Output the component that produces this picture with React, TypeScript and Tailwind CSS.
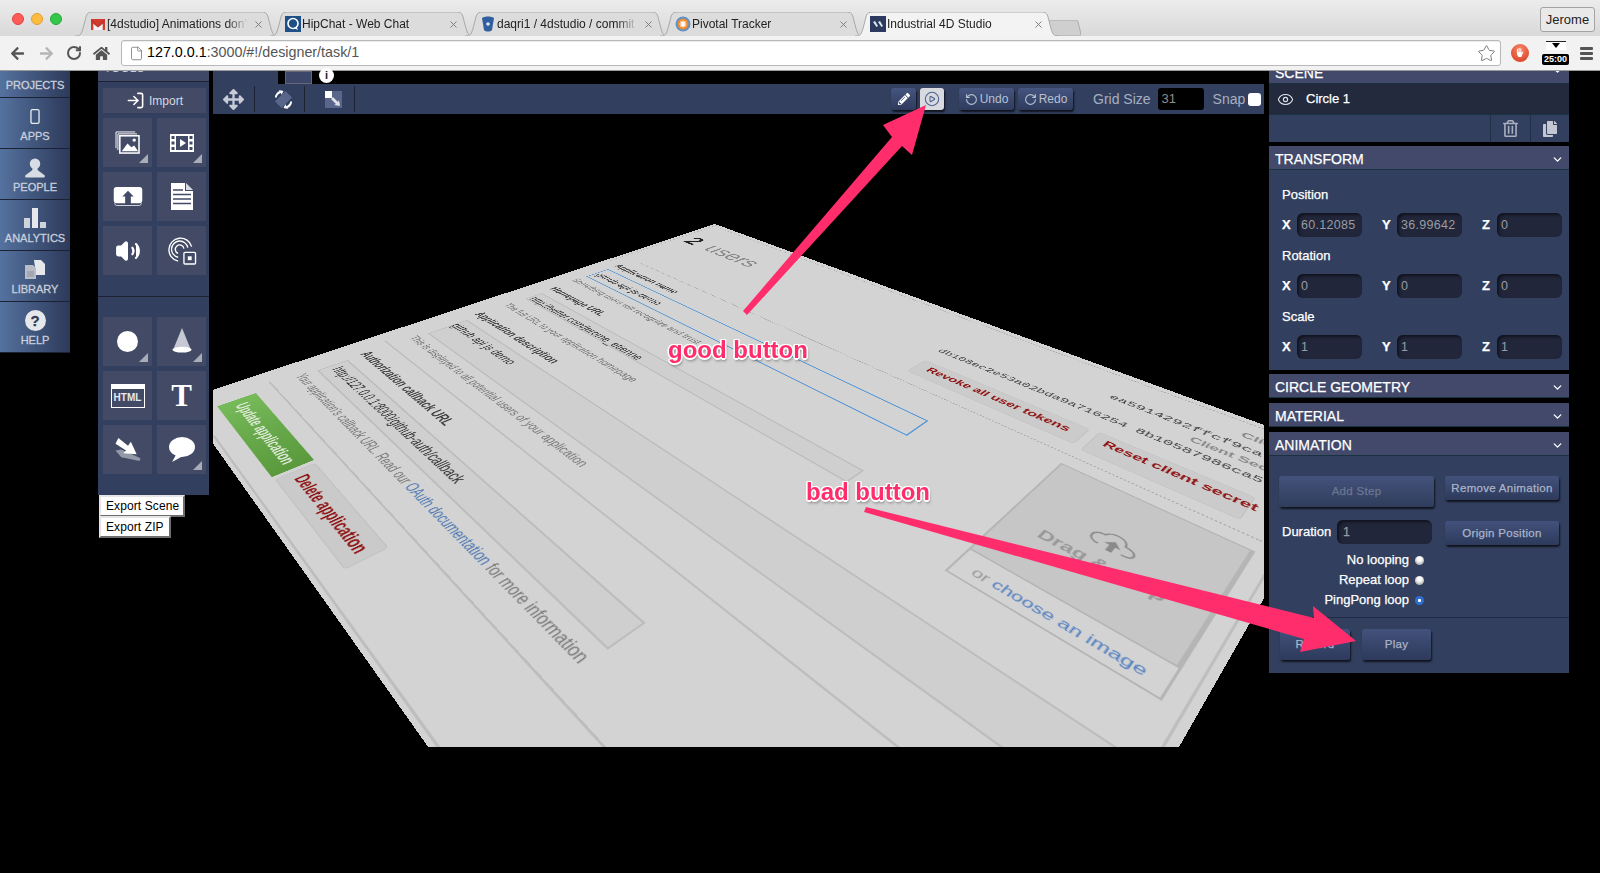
import { ReactNode } from "react";
import { ChevronDown, CirclePlay, Eye, File, LogIn, RotateCcw, RotateCw, Star, X, Volume2 } from "lucide-react";
import { FaArrowLeft, FaArrowRight, FaArrowsAlt, FaCopy, FaHome, FaPencilAlt, FaRegTrashAlt } from "react-icons/fa";

// --- perspective plane: the page in the 3D view is a flat div warped onto this quad ---
const CANVAS_X = 213;
const CANVAS_Y = 114;
const W = 1000;
const H = 850;
type Pt = [number, number];
const QUAD: Pt[] = [
  [715, 224],
  [1346, 455],
  [844, 1333],
  [182, 400],
];

function solveQuad(q: Pt[]) {
  const [[x0, y0], [x1, y1], [x2, y2], [x3, y3]] = q;
  const dx1 = x1 - x2, dx2 = x3 - x2, dx3 = x0 - x1 + x2 - x3;
  const dy1 = y1 - y2, dy2 = y3 - y2, dy3 = y0 - y1 + y2 - y3;
  const den = dx1 * dy2 - dx2 * dy1;
  const g = (dx3 * dy2 - dx2 * dy3) / den;
  const h = (dx1 * dy3 - dx3 * dy1) / den;
  return { a: x1 - x0 + g * x1, b: x3 - x0 + h * x3, c: x0, d: y1 - y0 + g * y1, e: y3 - y0 + h * y3, f: y0, g, h };
}

const local = QUAD.map(([x, y]) => [x - CANVAS_X, y - CANVAS_Y] as Pt);
const T = solveQuad(local);
const planeMatrix = `matrix3d(${T.a / W},${T.d / W},0,${T.g / W},${T.b / H},${T.e / H},0,${T.h / H},0,0,1,0,${T.c},${T.f},0,1)`;

// screen pixel -> page unit
function toPage([sx, sy]: Pt): Pt {
  const x = sx - CANVAS_X;
  const y = sy - CANVAS_Y;
  const { a, b, c, d, e, f, g, h } = T;
  const A = e - f * h, B = c * h - b, C = b * f - c * e;
  const D = f * g - d, E = a - c * g, F = c * d - a * f;
  const G = d * h - e * g, I = b * g - a * h, J = a * e - b * d;
  const w = G * x + I * y + J;
  return [((A * x + B * y + C) / w) * W, ((D * x + E * y + F) / w) * H];
}

function fitSize(text: string, len: number, family: string, weight: string) {
  const ctx = typeof document !== "undefined" ? document.createElement("canvas").getContext("2d") : null;
  if (!ctx) return 14;
  ctx.font = `${weight} 100px ${family}`;
  return (len / ctx.measureText(text).width) * 100;
}

type PlaneTextProps = { from: Pt; to: Pt; text: string; className?: string; mono?: boolean; bold?: boolean; children?: ReactNode };

function PlaneText({ from, to, text, className = "", mono = false, bold = false, children }: PlaneTextProps) {
  const a = toPage(from);
  const b = toPage(to);
  const family = mono ? '"Liberation Mono"' : '"Liberation Sans"';
  const size = fitSize(text, b[0] - a[0], family, bold ? "bold" : "normal");
  return (
    <span
      className={`absolute -translate-y-1/2 whitespace-nowrap leading-none ${mono ? "font-['Liberation_Mono',monospace]" : ""} ${bold ? "font-bold" : ""} ${className}`}
      style={{ left: a[0], top: (a[1] + b[1]) / 2, fontSize: size }}
    >
      {children ?? text}
    </span>
  );
}

function PlaneBox({ tl, br, className = "", children }: { tl: Pt; br: Pt; className?: string; children?: ReactNode }) {
  const a = toPage(tl);
  const b = toPage(br);
  return <div className={`absolute ${className}`} style={{ left: a[0], top: a[1], width: b[0] - a[0], height: b[1] - a[1] }}>{children}</div>;
}

function PlaneRule({ from, to, className = "h-[2px] bg-[#bdbdbd]" }: { from: Pt; to: Pt; className?: string }) {
  const a = toPage(from);
  const b = toPage(to);
  return <div className={`absolute ${className}`} style={{ left: a[0], top: (a[1] + b[1]) / 2, width: b[0] - a[0] }} />;
}

function PlaneVRule({ from, to }: { from: Pt; to: Pt }) {
  const a = toPage(from);
  const b = toPage(to);
  return <div className="absolute w-[2px] bg-[#bdbdbd]" style={{ left: (a[0] + b[0]) / 2, top: a[1], height: b[1] - a[1] }} />;
}

function Plane() {
  return (
    <div className="absolute left-0 top-0 origin-top-left bg-[#d3d3d3] w-[1000px] h-[850px] font-['Liberation_Sans',sans-serif]" style={{ transform: planeMatrix }}>
      <div className="absolute left-[6px] top-0 h-[240px] border-l-2 border-dotted border-[#aaa]" />
      <PlaneRule from={[718, 228]} to={[1264, 428]} className="border-t-2 border-dotted border-[#aaa]" />
      <PlaneRule from={[640, 263]} to={[1263, 540]} className="border-t-2 border-dotted border-[#aaa]" />
      <PlaneRule from={[213, 436]} to={[445, 747]} />
      <PlaneRule from={[268, 382]} to={[613, 747]} />
      <PlaneRule from={[385, 341]} to={[902, 747]} />
      <PlaneVRule from={[1263, 573]} to={[1161, 747]} />

      <PlaneBox tl={[256, 393]} br={[272, 477]} className="bg-gradient-to-l from-[#5a9a3c] to-[#76ba5a]" />
      <PlaneText from={[237, 405]} to={[292, 462]} text="Update application" className="text-[#dfe9d8]" bold />
      <PlaneBox tl={[315, 463]} br={[345, 570]} className="bg-[#cacaca] border border-[#c0c0c0] rounded-sm" />
      <PlaneText from={[298, 477]} to={[365, 550]} text="Delete application" className="text-[#8f1212]" bold />

      <PlaneText from={[299, 375]} to={[588, 658]} text="Your application's callback URL. Read our OAuth documentation for more information" className="text-[#777]">
        Your application's callback URL. Read our <span className="text-[#4a76b0]">OAuth documentation</span> for more information
      </PlaneText>

      <PlaneText from={[363, 353]} to={[450, 424]} text="Authorization callback URL" className="text-[#444]" bold />
      <PlaneBox tl={[348, 360]} br={[608, 650]} className="bg-[#cfcfcf] border-2 border-[#bdbdbd]" />
      <PlaneText from={[333, 369]} to={[462, 481]} text="http://127.0.0.1:8000/github-auth/callback" className="text-[#333]" />

      <PlaneText from={[412, 337]} to={[586, 465]} text="This is displayed to all potential users of your application" className="text-[#777]" />
      <PlaneText from={[478, 313]} to={[557, 362]} text="Application description" className="text-[#444]" bold />
      <PlaneBox tl={[467, 320]} br={[1100, 819]} className="bg-[#cfcfcf] border-2 border-[#bdbdbd]" />
      <PlaneText from={[453, 325]} to={[514, 363]} text="github api js demo" className="text-[#333]" />

      <PlaneText from={[507, 304]} to={[636, 381]} text="The full URL to your application homepage" className="text-[#777]" />
      <PlaneText from={[552, 288]} to={[603, 315]} text="Homepage URL" className="text-[#444]" bold />
      <PlaneBox tl={[542, 293]} br={[847, 483]} className="bg-[#cfcfcf] border-2 border-[#bdbdbd]" />
      <PlaneText from={[532, 298]} to={[640, 359]} text="http://twitter.com/jerome_etienne" className="text-[#333]" />

      <PlaneText from={[575, 279]} to={[700, 343]} text="Something users will recognize and trust" className="text-[#777]" />
      <PlaneText from={[617, 265]} to={[676, 293]} text="Application name" className="text-[#444]" bold />
      <PlaneBox tl={[608, 269]} br={[907, 436]} className="border-2 border-[#5b9bd5] bg-[#d3d3d3]" />
      <PlaneText from={[598, 274]} to={[660, 304]} text="github-api-js-demo" className="text-[#333]" />

      <PlaneText from={[687, 240]} to={[758, 264]} text="2  users" className="text-[#888] whitespace-pre">
        <span className="font-bold text-[#222]">2</span>{"  users"}
      </PlaneText>

      <PlaneText from={[939, 350]} to={[1263, 482]} text="db108ec2e53a02bda9a716254 8b10587986ca5" className="text-[#444]" mono />
      <PlaneText from={[1109, 397]} to={[1263, 455]} text="ea5914292ffcf9ca" className="text-[#444]" mono />
      <PlaneText from={[1241, 435]} to={[1290, 452]} text="Client" className="text-[#888]" bold />
      <PlaneText from={[1191, 438]} to={[1290, 478]} text="Client Secret" className="text-[#888]" bold />

      <PlaneBox tl={[925, 360]} br={[1074, 444]} className="bg-[#cbcbcb] border border-[#c0c0c0] rounded-sm" />
      <PlaneText from={[928, 369]} to={[1069, 430]} text="Revoke all user tokens" className="text-[#8f1212]" bold />
      <PlaneBox tl={[1099, 432]} br={[1240, 520]} className="bg-[#cbcbcb] border border-[#c0c0c0] rounded-sm" />
      <PlaneText from={[1104, 443]} to={[1257, 510]} text="Reset client secret" className="text-[#8f1212]" bold />

      <PlaneBox tl={[1061, 463]} br={[1161, 701]} className="bg-[#d3d3d3] border-2 border-[#b5b5b5]" />
      <PlaneBox tl={[1061, 463]} br={[1179, 668]} className="bg-[#c6c6c6] border-2 border-[#b5b5b5]" />
      <PlaneText from={[1039, 533]} to={[1166, 598]} text="Drag & drop" className="text-[#999]" bold />
      <PlaneBox tl={[1096, 524]} br={[1134, 566]} className="flex items-center justify-center text-[#8a8a8a]">
        <svg viewBox="0 0 48 32" className="w-full h-full" fill="none" stroke="currentColor" strokeWidth="2">
          <path d="M12 26c-6 0-10-4-10-9s5-9 10-8c2-5 7-8 13-7 6 1 9 6 9 10 6 0 11 3 11 8s-5 6-10 6" />
          <path d="M24 12l-8 8h5v10h6V20h5z" fill="currentColor" stroke="none" />
        </svg>
      </PlaneBox>
      <PlaneText from={[972, 572]} to={[1147, 672]} text="or choose an image" className="text-[#999]">
        or <span className="text-[#5480c0]">choose an image</span>
      </PlaneText>
    </div>
  );
}

// --- browser chrome ---
function GmailIcon() {
  return (
    <svg viewBox="0 0 16 16" className="w-4 h-4 shrink-0">
      <path d="M1 3h14v11h-2.5V7L8 10.5 3.5 7v7H1z" fill="#d33b2c" />
      <path d="M3.5 5.5L8 9l4.5-3.5V14h-9z" fill="#f2f2f2" />
      <path d="M1 3l7 5.5L15 3v3L8 11.5 1 6z" fill="#c5352a" />
    </svg>
  );
}
function HipChatIcon() {
  return (
    <svg viewBox="0 0 16 16" className="w-4 h-4 shrink-0">
      <rect width="16" height="16" fill="#1f4f87" />
      <circle cx="8" cy="7.5" r="5" fill="none" stroke="#fff" strokeWidth="1.6" />
      <path d="M9 12l4 2-1.5-3.5z" fill="#fff" />
    </svg>
  );
}
function BucketIcon() {
  return (
    <svg viewBox="0 0 16 16" className="w-4 h-4 shrink-0">
      <path d="M2 2c3-2 9-2 12 0l-2 12c-2 2-6 2-8 0z" fill="#2f5f9e" />
      <circle cx="8" cy="8" r="1.8" fill="#dfe8f2" />
    </svg>
  );
}
function PivotalIcon() {
  return (
    <svg viewBox="0 0 16 16" className="w-4 h-4 shrink-0">
      <circle cx="8" cy="8" r="7.5" fill="#5f92c7" />
      <circle cx="8" cy="8" r="5.5" fill="#f08a2c" />
      <path d="M8 4.5v7M4.5 8h7M5.5 5.5l5 5M10.5 5.5l-5 5" stroke="#fff" strokeWidth="1.2" />
    </svg>
  );
}
function StudioIcon() {
  return (
    <svg viewBox="0 0 16 16" className="w-4 h-4 shrink-0">
      <rect width="16" height="16" fill="#2b3a5e" />
      <path d="M3 6l2-1 3 5-1.500 1zM8 6l2-1 3 5-1.500 1z" fill="#dfe5f0" />
    </svg>
  );
}

function Tab({ icon, title, active = false }: { icon: ReactNode; title: string; active?: boolean }) {
  return (
    <div className={`relative w-[204px] h-[24px] -ml-[9px] first:ml-0 flex items-center pl-[15px] pr-[15px] ${active ? "z-10" : ""}`}>
      <svg viewBox="0 0 200 24" preserveAspectRatio="none" className="absolute inset-0 w-full h-full">
        <path
          d="M0 24C6 24 6 22 8 16L11 4C12 1 14 0 17 0L183 0C186 0 188 1 189 4L192 16C194 22 194 24 200 24"
          fill={active ? "#f3f3f3" : "#dcdcdc"}
          stroke="#a9a9a9"
          vectorEffect="non-scaling-stroke"
        />
      </svg>
      <div className="relative flex items-center w-full gap-px">
        {icon}
        <span className="flex-1 overflow-hidden whitespace-nowrap text-[12px] text-[#222] [mask-image:linear-gradient(to_right,#000_85%,transparent)]">{title}</span>
        <X size={11} strokeWidth={2} className="text-[#777] ml-1 shrink-0" />
      </div>
    </div>
  );
}

function BrowserChrome() {
  return (
    <div className="h-[71px] shrink-0 bg-[#e6e6e6] border-b border-[#9a9a9a]">
      <div className="relative h-[36px] flex items-end bg-gradient-to-b from-[#ececec] to-[#d9d9d9]">
        <div className="flex items-center gap-[7px] self-start pt-[13px] pl-[12px] w-[76px]">
          <span className="w-3 h-3 rounded-full bg-[#fc5b57] border border-[#e0443e]" />
          <span className="w-3 h-3 rounded-full bg-[#fdbc40] border border-[#dea034]" />
          <span className="w-3 h-3 rounded-full bg-[#34c84a] border border-[#27aa35]" />
        </div>
        <div className="flex items-end -ml-px">
          <Tab icon={<GmailIcon />} title="[4dstudio] Animations don't" />
          <Tab icon={<HipChatIcon />} title="HipChat - Web Chat" />
          <Tab icon={<BucketIcon />} title="daqri1 / 4dstudio / commit" />
          <Tab icon={<PivotalIcon />} title="Pivotal Tracker" />
          <Tab icon={<StudioIcon />} title="Industrial 4D Studio" active />
          <div className="relative w-[32px] h-[16px] -ml-[10px]">
            <svg viewBox="0 0 32 16" preserveAspectRatio="none" className="absolute inset-0 w-full h-full">
              <path d="M2 16L0 2C0 1 1 0 2 0H26C28 0 29 1 29 2L32 14C32 15 31 16 30 16Z" fill="#cfcfcf" stroke="#a9a9a9" />
            </svg>
          </div>
        </div>
        <div className="ml-auto self-start mt-[7px] mr-[5px] w-[55px] h-[25px] rounded-[3px] border border-[#a3a3a3] bg-[#e9e9e9] flex items-center justify-center text-[13px] text-[#222]">Jerome</div>
      </div>
      <div className="h-[34px] bg-[#f2f2f2] flex items-center">
        <div className="w-[121px] flex items-center shrink-0 pl-[10px]">
          <FaArrowLeft size={15} className="text-[#555]" />
          <FaArrowRight size={15} className="text-[#b5b5b5] ml-[14px]" />
          <RotateCw size={16} strokeWidth={3} className="text-[#555] ml-[12px]" />
          <FaHome size={17} className="text-[#555] ml-[11px]" />
        </div>
        <div className="flex items-center w-[1380px] h-[26px] rounded-[3px] border border-[#b8b8b8] bg-white shadow-[inset_0_1px_1px_rgba(0,0,0,0.08)] pl-[7px] pr-[4px]">
          <File size={15} strokeWidth={1.3} className="text-[#777]" />
          <span className="ml-[3px] text-[14.300px] text-[#555] whitespace-nowrap">
            <span className="text-black">127.0.0.1</span>:3000/#!/designer/task/1
          </span>
          <Star size={19} strokeWidth={1.2} className="ml-auto text-[#777]" />
        </div>
        <div className="flex items-center flex-1 pl-[10px]">
          <div className="w-[18px] h-[18px] rounded-full bg-[radial-gradient(circle_at_50%_30%,#f58a6a,#d8331a)] flex items-center justify-center">
            <svg viewBox="0 0 10 12" className="w-[10px] h-[12px]"><path d="M2 5V2h1v3h.6V1h1v4h.7V1.500h1V6l1-1.500 1 .5-2 5H3.500L2 7.500z" fill="#fff" /></svg>
          </div>
          <div className="ml-[13px] flex flex-col items-center w-[27px]">
            <div className="w-[20px] h-[9px] bg-white border-t border-[#222] flex justify-center">
              <span className="mt-px w-0 h-0 border-x-[4px] border-x-transparent border-t-[5px] border-t-black" />
            </div>
            <div className="h-[11px] w-[27px] mt-[4px] bg-black rounded-[2px] text-white text-[9px] leading-[11px] text-center font-bold">25:00</div>
          </div>
          <div className="ml-[11px] flex flex-col gap-[2px]">
            <span className="w-[13px] h-[3px] rounded-[1px] bg-[#555]" />
            <span className="w-[13px] h-[3px] rounded-[1px] bg-[#555]" />
            <span className="w-[13px] h-[3px] rounded-[1px] bg-[#555]" />
          </div>
        </div>
      </div>
    </div>
  );
}

// --- left nav ---
function NavItem({ label, icon }: { label: string; icon: ReactNode }) {
  return (
    <div className="h-[51px] flex flex-col items-center justify-end pb-[5px] border-b border-[#1c2233] bg-gradient-to-r from-[#55729f] to-[#2d3a5a]">
      <div className="h-[28px] flex items-center justify-center">{icon}</div>
      <span className="text-[11px] leading-[13px] text-[#c9cfdb]">{label}</span>
    </div>
  );
}

function LeftNav() {
  return (
    <div className="w-[70px] shrink-0 [-webkit-text-stroke:0.3px_currentColor]">
      <div className="h-[27px] pt-[2px] flex items-center justify-center border-b border-[#1c2233] bg-gradient-to-r from-[#55729f] to-[#2d3a5a] text-[11px] text-[#c9cfdb]">PROJECTS</div>
      <NavItem
        label="APPS"
        icon={<svg viewBox="0 0 10 16" className="w-[10px] h-[15px]"><rect x="0.7" y="0.7" width="8.600" height="14.600" rx="1.500" fill="none" stroke="#e8ebf0" strokeWidth="1.400" /></svg>}
      />
      <NavItem
        label="PEOPLE"
        icon={<svg viewBox="0 0 22 22" className="w-[22px] h-[21px]"><circle cx="11" cy="7" r="5.500" fill="#d8dce4" /><path d="M8.500 11.500L8 14 1 19c-1 1 0 2.500 1 2.500h18c1 0 2-1.500 1-2.500l-7-5-.5-2.500z" fill="#d8dce4" /></svg>}
      />
      <NavItem
        label="ANALYTICS"
        icon={<svg viewBox="0 0 22 20" className="w-[22px] h-[20px]"><rect y="10" width="6" height="10" fill="#cfd3da" /><rect x="8" width="6" height="20" fill="#e6e8ec" /><rect x="16" y="14" width="6" height="6" fill="#cfd3da" /></svg>}
      />
      <NavItem
        label="LIBRARY"
        icon={<svg viewBox="0 0 20 20" className="w-[20px] h-[20px]"><path d="M9 1h7l4 4v11h-9z" fill="#e6e8ec" /><path d="M0 6h8l3 3v11H0z" fill="#b7bcc6" /><path d="M2 13h7M2 15h7M2 17h7" stroke="#8d929d" strokeWidth="1" /></svg>}
      />
      <NavItem
        label="HELP"
        icon={
          <span className="w-[21px] h-[21px] rounded-full bg-[#e5e7eb] text-[#2f3a55] font-bold text-[15px] leading-[21px] text-center">?</span>
        }
      />
    </div>
  );
}

// --- tools panel ---
function Tile({ children, corner = false }: { children?: ReactNode; corner?: boolean }) {
  return (
    <div className="relative h-[49px] bg-[#424a66] flex items-center justify-center text-white">
      {children}
      {corner && <span className="absolute right-[4px] bottom-[4px] w-[9px] h-[9px] bg-[#a9adb9] [clip-path:polygon(100%_0,100%_100%,0_100%)]" />}
    </div>
  );
}

function ToolsPanel() {
  return (
    <div className="w-[111px] ml-[28px] shrink-0 h-[424px] bg-[#323f5e]">
      <div className="h-[11px] overflow-hidden bg-[#3f4866] border-b border-[#1d2233]">
        <div className="-mt-[12px] pl-[6px] text-[12px] text-[#c9cfdb]">TOOLS</div>
      </div>
      <div className="pl-[5px] pr-[3px] pt-[6px]">
        <div className="h-[25px] bg-[#424a66] flex items-center justify-center gap-1 text-[12px] text-[#d5d8e0]">
          <LogIn size={19} strokeWidth={2} className="text-white" />
          Import
        </div>
        <div className="grid grid-cols-2 gap-[5px] mt-[5px]">
          <Tile corner>
            <svg viewBox="0 0 26 24" className="w-[25px] h-[23px]" fill="none" stroke="#fff" strokeWidth="1">
              <path d="M1 18V1h20" />
              <path d="M3 20V3h20" />
              <rect x="5" y="5" width="20" height="18" strokeWidth="1.600" />
              <path d="M7 21l6-8 4 4 3-2 4 6z" fill="#fff" stroke="none" />
              <circle cx="20" cy="9.500" r="1.800" fill="#fff" stroke="none" />
            </svg>
          </Tile>
          <Tile corner>
            <svg viewBox="0 0 24 18" className="w-[24px] h-[18px]">
              <path fillRule="evenodd" d="M0 0h24v18H0zM6 2v14h12V2zM1.500 2v3h3V2zM1.500 7.500v3h3v-3zM1.500 13v3h3v-3zM19.500 2v3h3V2zM19.500 7.500v3h3v-3zM19.500 13v3h3v-3z" fill="#fff" />
              <path d="M10 5l6 4-6 4z" fill="#fff" />
            </svg>
          </Tile>
          <Tile>
            <svg viewBox="0 0 30 20" className="w-[30px] h-[19px]">
              <path fillRule="evenodd" d="M3 0h24c2 0 3 1 3 3v11c0 2-1 3-3 3H3c-2 0-3-1-3-3V3c0-2 1-3 3-3zM15 4l-6 6h3v7h6v-7h3z" fill="#fff" />
              <path d="M1 17c0 1.500 1 2.500 2 2.500h24c1 0 2-1 2-2.500" fill="none" stroke="#fff" strokeWidth="0.800" />
            </svg>
          </Tile>
          <Tile>
            <svg viewBox="0 0 22 27" className="w-[22px] h-[27px]">
              <path d="M0 0h14v8h8v19H0z" fill="#fff" />
              <path d="M15 0l7 7h-7z" fill="#d8dae0" />
              <path d="M2 7h10M2 11.500h18M2 16h18M2 20.500h18" stroke="#424a66" strokeWidth="1.400" />
            </svg>
          </Tile>
          <Tile>
            <Volume2 size={26} fill="#fff" strokeWidth={2} />
          </Tile>
          <Tile>
            <svg viewBox="0 0 30 30" className="w-[30px] h-[29px]" fill="none" stroke="#fff" strokeWidth="1.400">
              <path d="M25 11A12 12 0 1 0 11 26" />
              <path d="M21 12A8.500 8.500 0 1 0 11 22" />
              <path d="M17 13A4.500 4.500 0 1 0 11 18" />
              <rect x="17" y="17" width="12" height="12" rx="1" fill="#424a66" />
              <rect x="21" y="21" width="4" height="4" fill="#fff" stroke="none" />
            </svg>
          </Tile>
        </div>
      </div>
      <div className="mt-[21px] border-t border-[#1d2233] pl-[5px] pr-[3px] pt-[20px]">
        <div className="grid grid-cols-2 gap-[5px]">
          <Tile corner>
            <span className="w-[21px] h-[21px] rounded-full bg-white" />
          </Tile>
          <Tile corner>
            <svg viewBox="0 0 22 28" className="w-[22px] h-[27px]">
              <path d="M11 0L2 22h18z" fill="#c6c9d3" />
              <ellipse cx="11" cy="22.500" rx="10" ry="3" fill="#fff" />
            </svg>
          </Tile>
          <Tile>
            <div className="w-[34px] h-[24px] border border-white bg-[#424a66] flex flex-col">
              <div className="h-[4px] bg-white" />
              <div className="flex-1 text-[10px] font-bold leading-[18px] text-center text-[#e6e8ee]">HTML</div>
            </div>
          </Tile>
          <Tile>
            <span className="font-['Liberation_Serif',serif] font-bold text-[31px] leading-none">T</span>
          </Tile>
          <Tile>
            <svg viewBox="0 0 28 26" className="w-[28px] h-[25px]">
              <path d="M1 14l6-1 20 9-1 3-19-4z" fill="#9499a8" />
              <path d="M4 1l10 8 3-4 6 13-14-1 3-3L1 7z" fill="#fff" />
            </svg>
          </Tile>
          <Tile corner>
            <svg viewBox="0 0 26 25" className="w-[26px] h-[25px]">
              <ellipse cx="13" cy="10" rx="13" ry="10" fill="#fff" />
              <path d="M8 16L3 25l11-6z" fill="#fff" />
            </svg>
          </Tile>
        </div>
      </div>
    </div>
  );
}

function ExportButton({ label, width }: { label: string; width: string }) {
  return (
    <div className={`${width} h-[22px] -mb-px bg-white border-2 border-t-[#e5e5e5] border-l-[#e5e5e5] border-r-[#6d6d6d] border-b-[#6d6d6d] text-[12px] leading-[18px] tracking-[0.1px] text-black pl-[5px]`}>
      {label}
    </div>
  );
}

// --- center toolbar ---
function Sep({ className = "" }: { className?: string }) {
  return <span className={`w-px h-[26px] bg-[#1d2233] ${className}`} />;
}

function ToolBtn({ children, className = "" }: { children: ReactNode; className?: string }) {
  return (
    <div className={`h-[22px] flex items-center justify-center gap-[2px] rounded-[3px] bg-gradient-to-b from-[#45557f] to-[#2f3b5d] text-[12px] text-[#b8c0d2] shadow-[1px_2px_2px_rgba(0,0,0,0.7)] ${className}`}>
      {children}
    </div>
  );
}

function Toolbar() {
  return (
    <div className="h-[30px] bg-[#323f5e] flex items-center pl-[10px] pr-[2px]">
      <FaArrowsAlt size={21} className="text-[#c6cbd7]" />
      <Sep className="ml-[10px]" />
      <div className="w-[49px] flex justify-center pl-[7px]">
        <svg viewBox="0 0 22 22" className="w-[21px] h-[21px]">
          <path d="M13 2l7 7-11 11-7-7z" fill="#59658a" />
          <path d="M2 9c0-3 2-6 5-7l-1-1 5 1-2 4-1-2c-2 1-4 3-4 5z" fill="#fff" />
          <path d="M20 13c0 3-2 6-5 7l1 1-5-1 2-4 1 2c2-1 4-3 4-5z" fill="#fff" />
        </svg>
      </div>
      <Sep />
      <div className="w-[49px] flex justify-center pl-[8px]">
        <svg viewBox="0 0 17 17" className="w-[17px] h-[17px]">
          <rect width="17" height="17" fill="#59658a" />
          <rect width="7" height="7" fill="#fff" />
          <path d="M6 8l2-2 5 5 1-2 1 6-6-1 2-1z" fill="#dfe2ea" />
        </svg>
      </div>
      <Sep />
      <ToolBtn className="w-[25px] ml-[536px]"><FaPencilAlt size={12} className="text-white" /></ToolBtn>
      <div className="w-[24px] h-[22px] ml-[4px] rounded-[3px] bg-[#d8dae0] flex items-center justify-center shadow-[1px_2px_2px_rgba(0,0,0,0.7)]">
        <CirclePlay size={16} strokeWidth={1.6} className="text-[#4d628f]" />
      </div>
      <ToolBtn className="w-[55px] ml-[15px]"><RotateCcw size={13} />Undo</ToolBtn>
      <ToolBtn className="w-[55px] ml-[4px]"><RotateCw size={13} />Redo</ToolBtn>
      <span className="ml-[20px] text-[14px] text-[#a6afc2] whitespace-nowrap">Grid Size</span>
      <div className="w-[46px] h-[22px] ml-[7px] rounded-[3px] bg-black text-[13px] leading-[22px] text-[#8f8f8f] pl-[4px]">31</div>
      <span className="ml-[9px] text-[14px] text-[#a6afc2]">Snap</span>
      <span className="w-[13px] h-[13px] ml-[3px] rounded-[3px] bg-white" />
    </div>
  );
}

// --- right panel ---
function SectionHeader({ title }: { title: string }) {
  return (
    <div className="h-[24px] pt-[3px] bg-[#42496a] border-b border-[#18323f] flex items-center justify-between pl-[6px] pr-[5px] text-[14px] text-white">
      {title}
      <ChevronDown size={13} strokeWidth={2.5} className="text-white" />
    </div>
  );
}

function Field({ axis, value }: { axis: string; value: string }) {
  return (
    <div className="flex items-center w-[100px] shrink-0">
      <span className="w-[15px] text-[13px] font-bold text-white">{axis}</span>
      <div className="w-[65px] h-[24px] overflow-hidden rounded-md bg-[#21263a] shadow-[inset_2px_2px_3px_rgba(0,0,0,0.5)] pl-[4px] text-[12.500px] leading-[24px] text-[#9a9ba3] tracking-[0.3px] [-webkit-text-stroke:0]">{value}</div>
    </div>
  );
}

function Vector({ label, values, gap = "mb-[8px]" }: { label: string; values: string[]; gap?: string }) {
  return (
    <div className={gap}>
      <div className="h-[20px] mb-[9px] text-[13px] leading-[22px] text-white">{label}</div>
      <div className="flex">
        <Field axis="X" value={values[0]} />
        <Field axis="Y" value={values[1]} />
        <Field axis="Z" value={values[2]} />
      </div>
    </div>
  );
}

function PanelBtn({ label, className = "" }: { label: string; className?: string }) {
  return (
    <div className={`flex items-center justify-center pt-px rounded-[3px] bg-gradient-to-b from-[#43527c] to-[#2d3a5c] shadow-[1px_2px_2px_rgba(0,0,0,0.7)] text-[11.500px] tracking-[0.3px] text-[#aab3c8] ${className}`}>
      {label}
    </div>
  );
}

function LoopOption({ label, on = false }: { label: string; on?: boolean }) {
  return (
    <div className="h-[20px] flex items-center justify-end gap-[6px] pr-[10px]">
      <span className="text-[13px] text-white">{label}</span>
      <span
        className={`w-[9px] h-[9px] rounded-full ${on ? "bg-[radial-gradient(circle,#fff_20%,#2c6fd0_30%)]" : "bg-[radial-gradient(circle_at_50%_35%,#fff_25%,#8a8a8a)]"}`}
      />
    </div>
  );
}

function RightPanel() {
  return (
    <div className="w-[300px] ml-[5px] shrink-0 overflow-hidden [-webkit-text-stroke:0.25px_currentColor]">
      <div className="h-[13px] overflow-hidden bg-[#42496a] border-b border-[#18323f] flex justify-between pl-[6px] pr-[5px]">
        <span className="-mt-[8px] text-[14px] text-white">SCENE</span>
        <ChevronDown size={13} strokeWidth={2.5} className="-mt-[7px] text-white" />
      </div>
      <div className="h-[30px] bg-[#232a3e] flex items-center pl-[8px] text-[13px] text-white">
        <Eye size={17} strokeWidth={1.500} className="text-[#e3e5ea]" />
        <span className="ml-[12px]">Circle 1</span>
      </div>
      <div className="h-[28px] bg-[#323f5e] flex justify-end border-t border-[#18323f]">
        <div className="w-[40px] flex items-center justify-center border-l border-[#1d3147]"><FaRegTrashAlt size={17} className="text-[#a9afbf]" /></div>
        <div className="w-[39px] flex items-center justify-center border-l border-[#1d3147]"><FaCopy size={16} className="text-[#c3c7d1]" /></div>
      </div>

      <div className="mt-[4px]">
        <SectionHeader title="TRANSFORM" />
        <div className="bg-[#323f5e] pl-[13px] pt-[14px] pb-[11px]">
          <Vector label="Position" values={["60.12085", "36.99642", "0"]} />
          <Vector label="Rotation" values={["0", "0", "0"]} />
          <Vector label="Scale" values={["1", "1", "1"]} gap="" />
        </div>
      </div>

      <div className="mt-[4px]"><SectionHeader title="CIRCLE GEOMETRY" /></div>
      <div className="mt-[5px]"><SectionHeader title="MATERIAL" /></div>
      <div className="mt-[5px]">
        <SectionHeader title="ANIMATION" />
        <div className="bg-[#323f5e] h-[217px]">
          <div className="flex pl-[10px] pt-[20px] gap-[11px]">
            <div className="w-[155px]">
              <PanelBtn label="Add Step" className="h-[31px] !text-[#6d7690] from-[#3a4869] to-[#303d5c]" />
              <div className="flex items-center mt-[13px] pl-[3px]">
                <span className="w-[55px] text-[13px] text-white">Duration</span>
                <div className="w-[95px] h-[24px] rounded-md bg-[#21263a] shadow-[inset_2px_2px_3px_rgba(0,0,0,0.5)] pl-[6px] text-[12.500px] leading-[24px] text-[#9a9ba3]">1</div>
              </div>
              <div className="mt-[6px]">
                <LoopOption label="No looping" />
                <LoopOption label="Repeat loop" />
                <LoopOption label="PingPong loop" on />
              </div>
            </div>
            <div className="w-[114px]">
              <PanelBtn label="Remove Animation" className="h-[24px]" />
              <PanelBtn label="Origin Position" className="h-[24px] mt-[21px]" />
            </div>
          </div>
          <div className="mt-[7px] border-t border-[#1c2b44] flex pl-[11px] pt-[11px] gap-[12px]">
            <PanelBtn label="Record" className="w-[70px] h-[31px]" />
            <PanelBtn label="Play" className="w-[69px] h-[31px]" />
          </div>
        </div>
      </div>
    </div>
  );
}

function Annotations() {
  const outline = "[text-shadow:1px_1px_0_#fff,-1px_1px_0_#fff,1px_-1px_0_#fff,-1px_-1px_0_#fff,0_1.500px_0_#fff,0_-1.500px_0_#fff,1.500px_0_0_#fff,-1.500px_0_0_#fff,1px_3px_3px_rgba(0,0,0,0.4)]";
  return (
    <>
      <svg viewBox="0 0 1600 873" className="absolute inset-0 w-[1600px] h-[873px] pointer-events-none">
        <path d="M743 311L892 137 883 125 926 105 912 155 902 146 747 315Z" fill="#ff2d6b" />
        <path d="M866 507L1314 618 1313 606 1356 641 1300 652 1304 639 864 512Z" fill="#ff2d6b" />
      </svg>
      <span className={`absolute left-[668px] top-[336px] text-[24px] leading-[28px] font-bold text-[#ff2d6b] ${outline}`}>good button</span>
      <span className={`absolute left-[806px] top-[478px] text-[24px] leading-[28px] font-bold text-[#ff2d6b] ${outline}`}>bad button</span>
    </>
  );
}

export default function App() {
  return (
    <div className="relative w-[1600px] h-[873px] overflow-hidden bg-black flex flex-col font-['Liberation_Sans',Arial,sans-serif]">
      <BrowserChrome />
      <div className="flex items-start flex-1 min-h-0">
        <LeftNav />
        <div className="shrink-0">
          <ToolsPanel />
          <div className="ml-[29px]">
            <ExportButton label="Export Scene" width="w-[86px]" />
            <ExportButton label="Export ZIP" width="w-[72px]" />
          </div>
        </div>
        <div className="w-[1051px] ml-[4px] shrink-0">
          <div className="h-[13px] flex">
            <div className="w-[65px] bg-[#323f5e]" />
            <div className="w-[27px] ml-[7px] bg-[#3b4668] border border-[#667]" />
            <span className="w-[15px] h-[15px] -mt-[3px] ml-[7px] rounded-full bg-white text-[#222] text-[11px] font-bold leading-[15px] text-center">i</span>
          </div>
          <Toolbar />
          <div className="relative h-[633px] overflow-hidden bg-black">
            <Plane />
          </div>
        </div>
        <RightPanel />
      </div>
      <Annotations />
    </div>
  );
}
